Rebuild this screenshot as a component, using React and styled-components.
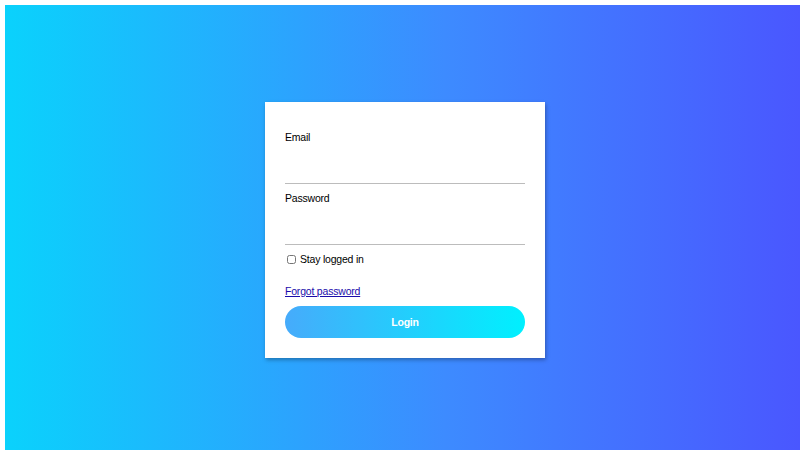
import React, { useState } from "react";
import styled, { createGlobalStyle } from "styled-components";

const GlobalStyle = createGlobalStyle`
  html, body {
    margin: 0;
    padding: 0;
    overflow: hidden;
    background: #fff;
  }
  body {
    padding: 5px 0 0 5px;
    font-family: "Liberation Sans", Arial, sans-serif;
  }
`;

const Page = styled.div`
  display: flex;
  align-items: center;
  justify-content: center;
  width: 100vw;
  height: 100vh;
  background: linear-gradient(to right, #0ad2fc 0%, #3d8bff 55%, #4a56ff 100%);
`;

const Card = styled.form`
  width: 240px;
  padding: 20px;
  background: #fff;
  box-shadow: 1px 2px 4px rgba(0, 0, 0, 0.3);
`;

const Field = styled.div`
  display: flex;
  flex-direction: column;
  margin-top: ${(p) => (p.$first ? "8px" : "7px")};
`;

const Label = styled.label`
  font-size: 10.5px;
  letter-spacing: -0.2px;
  line-height: 14px;
  color: #000;
`;

const Input = styled.input`
  height: 39px;
  padding: 0;
  border: none;
  border-bottom: 1px solid #bcbcbc;
  outline: none;
  font-family: inherit;
  font-size: 10.5px;
  background: transparent;
`;

const CheckRow = styled.label`
  display: flex;
  align-items: center;
  gap: 4px;
  margin-top: 7px;
  padding-left: 2px;
  font-size: 10.5px;
  letter-spacing: -0.2px;
  line-height: 14px;
  color: #000;
`;

const Check = styled.input`
  width: 9px;
  height: 9px;
  margin: 0;
`;

const ForgotLink = styled.a`
  display: block;
  margin-top: 18px;
  font-size: 10.5px;
  letter-spacing: -0.2px;
  line-height: 14px;
  color: #1a0dab;
  text-decoration: underline;
`;

const LoginButton = styled.button`
  display: block;
  width: 100%;
  height: 32px;
  margin-top: 8px;
  border: none;
  border-radius: 16px;
  background: linear-gradient(to right, #46abfb 0%, #00f0fe 100%);
  color: #fff;
  font-family: inherit;
  font-size: 10.5px;
  letter-spacing: -0.2px;
  font-weight: 700;
  cursor: pointer;
`;

export default function App() {
  const [stay, setStay] = useState(false);

  return (
    <>
      <GlobalStyle />
      <Page>
        <Card onSubmit={(e) => e.preventDefault()}>
          <Field $first>
            <Label htmlFor="email">Email</Label>
            <Input id="email" type="email" />
          </Field>
          <Field>
            <Label htmlFor="password">Password</Label>
            <Input id="password" type="password" />
          </Field>
          <CheckRow>
            <Check
              type="checkbox"
              checked={stay}
              onChange={(e) => setStay(e.target.checked)}
            />
            Stay logged in
          </CheckRow>
          <ForgotLink href="#">Forgot password</ForgotLink>
          <LoginButton type="submit">Login</LoginButton>
        </Card>
      </Page>
    </>
  );
}
